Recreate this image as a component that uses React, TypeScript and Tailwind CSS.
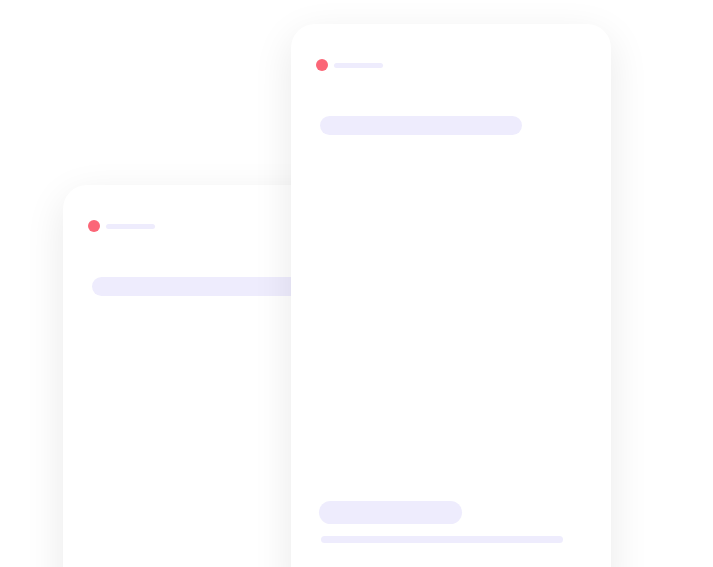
import React from 'react';

const CardHeader = () => (
    <div className="flex items-center gap-[6px]">
        <div className="w-3 h-3 rounded-full bg-[#fb6677]" />
        <div className="w-[49px] h-[5px] rounded-full bg-[#eeecfd]" />
    </div>
);

const App = () => {
    return (
        <div className="w-full h-[567px] overflow-hidden bg-white">
            <div className="flex items-start pl-[63px] pt-[24px]">
                {/* Back card */}
                <div className="mt-[161px] w-[320px] h-[560px] shrink-0 rounded-[24px] bg-white shadow-[0_12px_40px_rgba(0,0,0,0.09)] pl-[25px] pt-[35px]">
                    <CardHeader />
                    <div className="mt-[45px] ml-[4px] w-[240px] h-[19px] rounded-full bg-[#eeecfd]" />
                </div>

                {/* Front card */}
                <div className="relative z-10 -ml-[92px] w-[320px] h-[580px] shrink-0 rounded-[24px] bg-white shadow-[0_12px_40px_rgba(0,0,0,0.09)] pl-[25px] pt-[35px] flex flex-col">
                    <CardHeader />
                    <div className="mt-[45px] ml-[4px] w-[202px] h-[19px] rounded-full bg-[#eeecfd]" />
                    <div className="mt-[366px] ml-[3px] w-[143px] h-[23px] rounded-full bg-[#eeecfd]" />
                    <div className="mt-[12px] ml-[5px] w-[242px] h-[7px] rounded-full bg-[#eeecfd]" />
                </div>
            </div>
        </div>
    );
};

export default App;
